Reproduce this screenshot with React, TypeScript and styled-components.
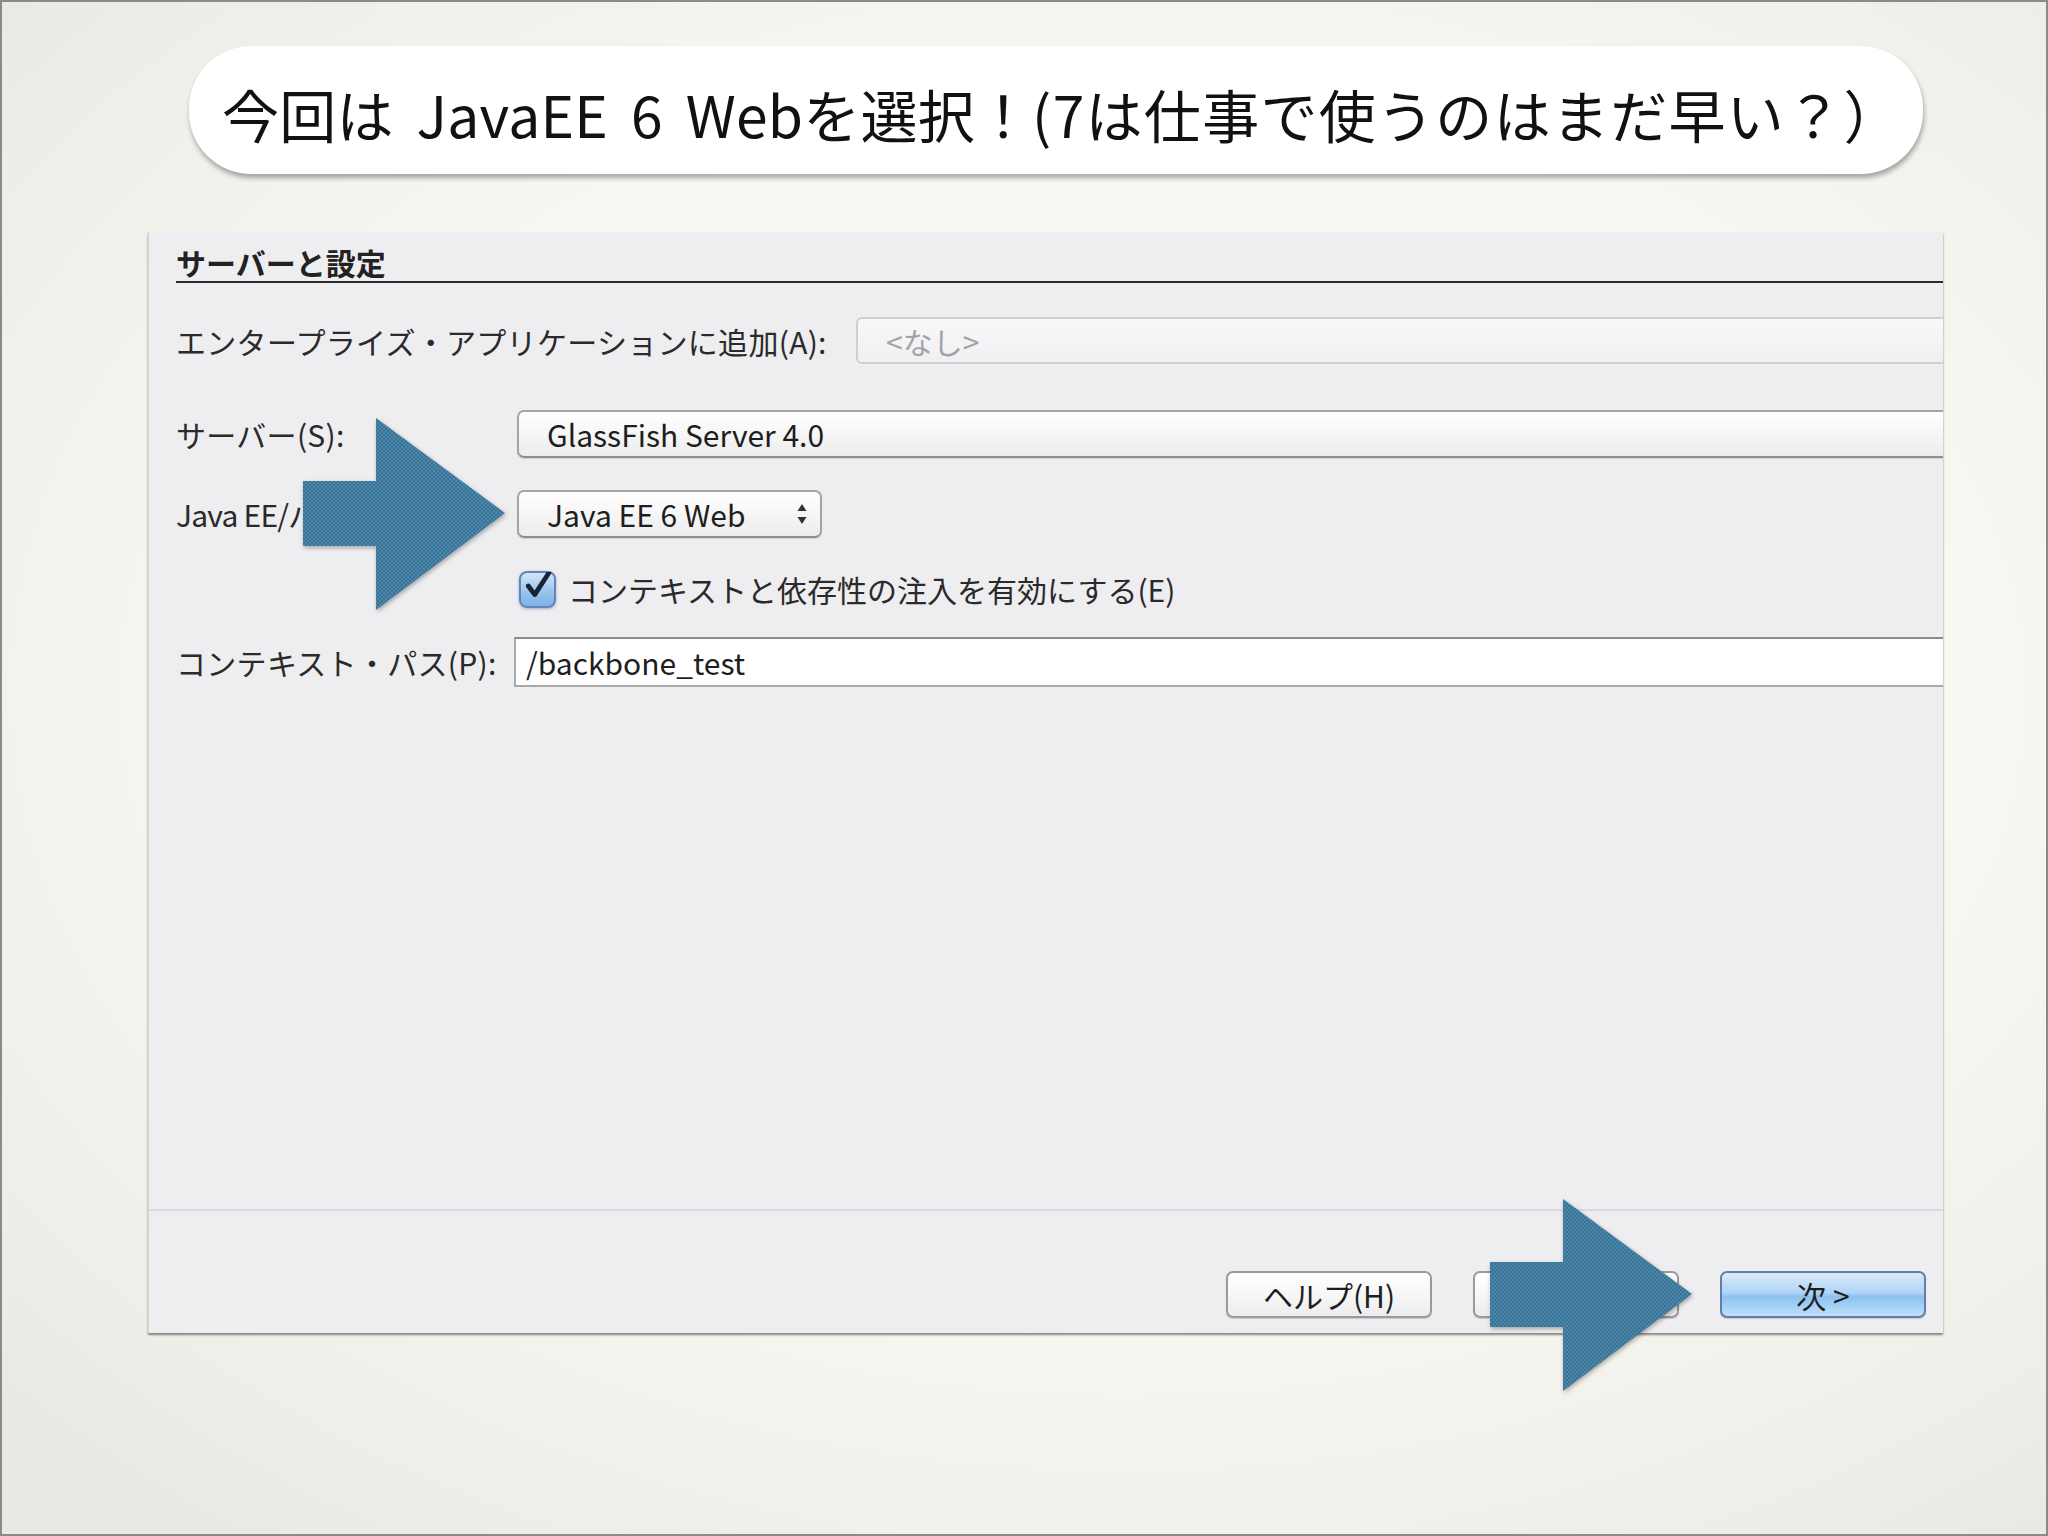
import React from "react";
import styled, { createGlobalStyle } from "styled-components";

const Global = createGlobalStyle`
  html, body { margin: 0; padding: 0; }
  body { font-family: "Noto Sans CJK JP", "Noto Sans", sans-serif; }
  * { box-sizing: border-box; }
`;

const Page = styled.div`
  position: relative;
  width: 2048px;
  height: 1536px;
  border: 2px solid #8a8a88;
  overflow: hidden;
  display: flex;
  flex-direction: column;
  background: radial-gradient(ellipse 75% 70% at 55% 45%, #f8f7f2 55%, #efeee8 85%, #e9e8e2 100%);
`;

const Bubble = styled.div`
  margin: 44px 0 0 187px;
  width: 1734px;
  height: 128px;
  border-radius: 62px;
  background: #ffffff;
  box-shadow: 1px 4px 5px rgba(0, 0, 0, 0.32);
  display: flex;
  align-items: center;
  padding: 5px 0 0 33px;
  font-family: "Noto Sans CJK JP", sans-serif;
  font-size: 57px;
  letter-spacing: 0.2px;
  color: #111;
  white-space: nowrap;
  word-spacing: 10px;
`;

const Wide = styled.span`
  letter-spacing: 1.3px;
`;

const Panel = styled.div`
  margin: 58px 0 0 146px;
  width: 1795px;
  height: 1101px;
  background: #eeedf0;
  display: flex;
  flex-direction: column;
  overflow: hidden;
  border-left: 1px solid #d6d6d6;
  box-shadow: 0 2px 2px rgba(0, 0, 0, 0.45);
`;

const SectionHeader = styled.div`
  margin: 12px 0 0 27px;
  font-size: 30px;
  line-height: 36px;
  font-weight: 700;
  color: #222;
  padding-bottom: 1px;
  border-bottom: 2px solid #2c2c2c;
`;

const Form = styled.div`
  padding-left: 27px;
  display: flex;
  flex-direction: column;
`;

const Row = styled.div<{ $top: number; $h: number }>`
  display: flex;
  align-items: center;
  margin-top: ${(p) => p.$top}px;
  height: ${(p) => p.$h}px;
`;

const Label = styled.div<{ $w: number; $ls?: number }>`
  width: ${(p) => p.$w}px;
  flex: none;
  font-size: 30px;
  letter-spacing: ${(p) => p.$ls ?? 0.3}px;
  color: #2a2a2a;
  white-space: nowrap;
`;

const DisabledCombo = styled.div`
  flex: 1;
  height: 47px;
  margin-right: -12px;
  border: 2px solid #d0d0d3;
  border-radius: 6px;
  background: linear-gradient(#f8f8fa, #f0f0f2);
  color: #a3a3a6;
  font-size: 30px;
  display: flex;
  align-items: center;
  padding-left: 28px;
`;

const PopupButton = styled.div<{ $w?: number }>`
  ${(p) => (p.$w ? `width: ${p.$w}px; flex: none;` : `flex: 1; margin-right: -12px;`)}
  height: 48px;
  border: 2px solid #a4a4a6;
  border-bottom-color: #8e8e90;
  border-radius: 7px;
  background: linear-gradient(#ffffff 0%, #f6f6f6 50%, #ececee 100%);
  box-shadow: 0 1px 1px rgba(0, 0, 0, 0.12);
  display: flex;
  align-items: center;
  justify-content: space-between;
  padding: 0 12px 0 28px;
  font-size: 30px;
  color: #1e1e1e;
  white-space: nowrap;
`;

const CheckRow = styled.div`
  display: flex;
  align-items: center;
  gap: 12px;
  margin: 31px 0 0 343px;
  height: 40px;
`;

const CheckBox = styled.div`
  width: 37px;
  height: 37px;
  flex: none;
  border-radius: 8px;
  border: 2px solid #5f86b6;
  background: linear-gradient(#d3e5f8 0%, #9cc4ee 55%, #7fb1e8 100%);
  box-shadow: 0 1px 3px rgba(40, 80, 140, 0.4);
  display: flex;
  align-items: center;
  justify-content: center;
`;

const CheckText = styled.span`
  font-size: 30px;
  color: #2a2a2a;
  white-space: nowrap;
`;

const TextField = styled.div`
  flex: 1;
  height: 50px;
  margin-right: -12px;
  background: #ffffff;
  border: 2px solid #a8a8aa;
  border-top-color: #8a8a8c;
  display: flex;
  align-items: center;
  padding-left: 10px;
  font-size: 30px;
  color: #1e1e1e;
`;

const Spacer = styled.div`
  flex: 1;
`;

const Footer = styled.div`
  height: 124px;
  flex: none;
  border-top: 2px solid #d9d8dc;
  display: flex;
  justify-content: flex-end;
  align-items: flex-end;
  gap: 41px;
  padding: 0 17px 15px 0;
`;

const Button = styled.div<{ $primary?: boolean }>`
  width: 206px;
  height: 47px;
  border-radius: 7px;
  border: 2px solid ${(p) => (p.$primary ? "#5f7fa6" : "#9a9a9c")};
  background: ${(p) =>
    p.$primary
      ? "linear-gradient(#d9ebfb 0%, #b0d4f5 45%, #8cc1f0 55%, #bfe0fb 100%)"
      : "linear-gradient(#ffffff 0%, #f7f7f7 50%, #ececee 100%)"};
  box-shadow: 0 1px 1px rgba(0, 0, 0, 0.15);
  display: flex;
  align-items: center;
  justify-content: center;
  font-size: 30px;
  color: #1e1e1e;
  white-space: nowrap;
`;

const ArrowWrap = styled.svg<{ $x: number; $y: number }>`
  position: absolute;
  left: ${(p) => p.$x}px;
  top: ${(p) => p.$y}px;
  width: 206px;
  height: 196px;
  overflow: visible;
  filter: drop-shadow(1px 2px 2px rgba(0, 0, 0, 0.3));
`;

function Arrow({ x, y, id }: { x: number; y: number; id: string }) {
  return (
    <ArrowWrap $x={x} $y={y} viewBox="0 0 206 196">
      <defs>
        <pattern id={id} width="4" height="4" patternUnits="userSpaceOnUse">
          <rect width="4" height="4" fill="#4b88ab" />
          <circle cx="1" cy="1" r="0.9" fill="#306789" />
          <circle cx="3" cy="3" r="0.9" fill="#306789" />
        </pattern>
      </defs>
      <polygon
        points="0,63 73,63 73,0 202,95 73,192 73,128 0,128"
        fill={`url(#${id})`}
      />
    </ArrowWrap>
  );
}

function Stepper() {
  return (
    <svg width="12" height="24" viewBox="0 0 12 24">
      <polygon points="6,2 10.5,9 1.5,9" fill="#333" />
      <polygon points="6,22 10.5,15 1.5,15" fill="#333" />
    </svg>
  );
}

function Check() {
  return (
    <svg width="28" height="28" viewBox="0 0 26 26" style={{ marginTop: -6 }}>
      <path
        d="M4 13 L10 21 L23 1"
        fill="none"
        stroke="#1b2433"
        strokeWidth="4.4"
        strokeLinecap="round"
        strokeLinejoin="round"
      />
    </svg>
  );
}

export default function App() {
  return (
    <>
      <Global />
      <Page>
        <Bubble>
          今回は JavaEE 6 Webを選択！<Wide>(7は仕事で使うのはまだ早い？）</Wide>
        </Bubble>
        <Panel>
          <SectionHeader>サーバーと設定</SectionHeader>
          <Form>
            <Row $top={34} $h={47}>
              <Label $w={680}>エンタープライズ・アプリケーションに追加(A):</Label>
              <DisabledCombo>&lt;なし&gt;</DisabledCombo>
            </Row>
            <Row $top={46} $h={48}>
              <Label $w={341}>サーバー(S):</Label>
              <PopupButton>GlassFish Server 4.0</PopupButton>
            </Row>
            <Row $top={32} $h={48}>
              <Label $w={341} $ls={-0.8}>Java EE/バージョン(J):</Label>
              <PopupButton $w={305}>
                Java EE 6 Web
                <Stepper />
              </PopupButton>
            </Row>
            <CheckRow>
              <CheckBox>
                <Check />
              </CheckBox>
              <CheckText>コンテキストと依存性の注入を有効にする(E)</CheckText>
            </CheckRow>
            <Row $top={28} $h={50}>
              <Label $w={338}>コンテキスト・パス(P):</Label>
              <TextField>/backbone_test</TextField>
            </Row>
          </Form>
          <Spacer />
          <Footer>
            <Button>ヘルプ(H)</Button>
            <Button>&lt; 戻る(B)</Button>
            <Button $primary>次 &gt;</Button>
          </Footer>
        </Panel>
        <Arrow x={301} y={416} id="dots1" />
        <Arrow x={1488} y={1197} id="dots2" />
      </Page>
    </>
  );
}
